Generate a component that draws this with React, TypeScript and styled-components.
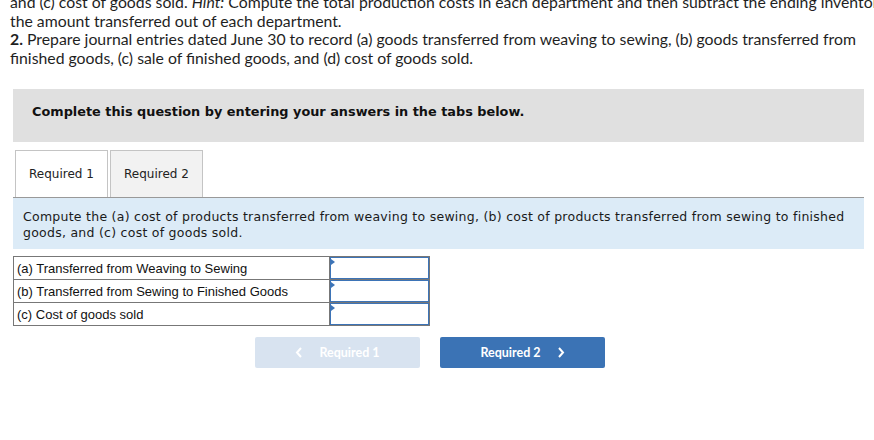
import React from 'react'
import styled, { createGlobalStyle } from 'styled-components'

const GlobalStyle = createGlobalStyle`
  html, body {
    margin: 0;
    padding: 0;
    background: #fff;
    overflow: hidden;
  }
  body {
    width: 874px;
    height: 440px;
  }
`

const Page = styled.div`
  width: 874px;
  height: 440px;
  overflow: hidden;
`

const Intro = styled.div`
  width: 900px;
  margin-top: -7px;
  padding-left: 10px;
  font-family: Lato, 'Open Sans', sans-serif;
  font-size: 15.8px;
  line-height: 18.5px;
  color: #1f1f1f;

  em {
    font-style: italic;
  }
  b {
    font-weight: 700;
  }
`

const NoWrap = styled.span`
  white-space: nowrap;
`

const Section = styled.div`
  width: 851px;
  margin-left: 13px;
`

const Prompt = styled.div`
  margin-top: 22px;
  height: 53px;
  box-sizing: border-box;
  padding: 15px 0 0 19px;
  background: #e0e0e0;
  font-family: 'DejaVu Sans', Verdana, sans-serif;
  font-weight: 700;
  font-size: 12.85px;
  line-height: 15px;
  color: #111;
`

const TabList = styled.div`
  margin-top: 8px;
  display: flex;
  gap: 2px;
  padding-left: 2px;
  border-bottom: 1px solid #999;
`

const Tab = styled.div<{ active?: boolean }>`
  width: 91px;
  height: 46px;
  display: flex;
  align-items: center;
  justify-content: center;
  border: 1px solid #c4c4c4;
  border-bottom: none;
  background: ${({ active }) => (active ? '#fff' : '#f2f2f2')};
  font-family: 'DejaVu Sans', Verdana, sans-serif;
  font-size: 12px;
  color: #222;
`

const Instructions = styled.div`
  padding: 11px 6px 8px 10px;
  background: #dcebf7;
  font-family: 'DejaVu Sans', Verdana, sans-serif;
  font-size: 12.5px;
  line-height: 16px;
  letter-spacing: 0.26px;
  color: #1a1a1a;
`

const Table = styled.table`
  margin-top: 7px;
  width: 417px;
  border-collapse: collapse;
  font-family: 'Liberation Sans', Arial, sans-serif;
  font-size: 13px;
  color: #111;
`

const LabelCell = styled.td`
  width: 312px;
  height: 22px;
  padding: 0 0 0 3px;
  border: 1px solid #777;
`

const InputCell = styled.td`
  padding: 0;
  border: 1px solid #777;
`

const InputBox = styled.div`
  position: relative;
  height: 20px;
  border: 1px solid #3d74b7;
  background: #fff;
`

const Marker = styled.span`
  position: absolute;
  left: 0;
  top: 1px;
  width: 0;
  height: 0;
  border-top: 3px solid transparent;
  border-bottom: 3px solid transparent;
  border-left: 4px solid #3d74b7;
`

const NavRow = styled.div`
  margin-top: 11px;
  padding-left: 242px;
  display: flex;
  gap: 20px;
`

const NavButton = styled.div<{ disabled?: boolean }>`
  width: 165px;
  height: 31px;
  display: flex;
  align-items: center;
  justify-content: center;
  gap: 16px;
  border-radius: 2px;
  background: ${({ disabled }) => (disabled ? '#d8e3f0' : '#3b73b5')};
  color: #fff;
  font-family: Lato, 'Open Sans', sans-serif;
  font-weight: 700;
  font-size: 12.5px;
`

const Chevron = ({ dir }: { dir: 'left' | 'right' }) => (
  <svg width="8" height="11" viewBox="0 0 8 11">
    <path
      d={dir === 'left' ? 'M6 1 L2 5.5 L6 10' : 'M2 1 L6 5.5 L2 10'}
      fill="none"
      stroke="#fff"
      strokeWidth="2"
    />
  </svg>
)

const rows = [
  '(a) Transferred from Weaving to Sewing',
  '(b) Transferred from Sewing to Finished Goods',
  '(c) Cost of goods sold'
]

export default function App() {
  return (
    <Page>
      <GlobalStyle />
      <Intro>
        <NoWrap>
          and (c) cost of goods sold. <em>Hint:</em> Compute the total production costs in each
          department and then subtract the ending inventory to determine
        </NoWrap>
        <br />
        the amount transferred out of each department.
        <br />
        <b>2.</b> Prepare journal entries dated June 30 to record (a) goods transferred from weaving
        to sewing, (b) goods transferred from finished goods, (c) sale of finished goods, and (d)
        cost of goods sold.
      </Intro>
      <Section>
        <Prompt>Complete this question by entering your answers in the tabs below.</Prompt>
        <TabList>
          <Tab active>Required 1</Tab>
          <Tab>Required 2</Tab>
        </TabList>
        <Instructions>
          Compute the (a) cost of products transferred from weaving to sewing, (b) cost of products
          transferred from sewing to finished goods, and (c) cost of goods sold.
        </Instructions>
        <Table>
          <tbody>
            {rows.map((r) => (
              <tr key={r}>
                <LabelCell>{r}</LabelCell>
                <InputCell>
                  <InputBox>
                    <Marker />
                  </InputBox>
                </InputCell>
              </tr>
            ))}
          </tbody>
        </Table>
        <NavRow>
          <NavButton disabled>
            <Chevron dir="left" />
            <span>Required 1</span>
          </NavButton>
          <NavButton>
            <span>Required 2</span>
            <Chevron dir="right" />
          </NavButton>
        </NavRow>
      </Section>
    </Page>
  )
}
